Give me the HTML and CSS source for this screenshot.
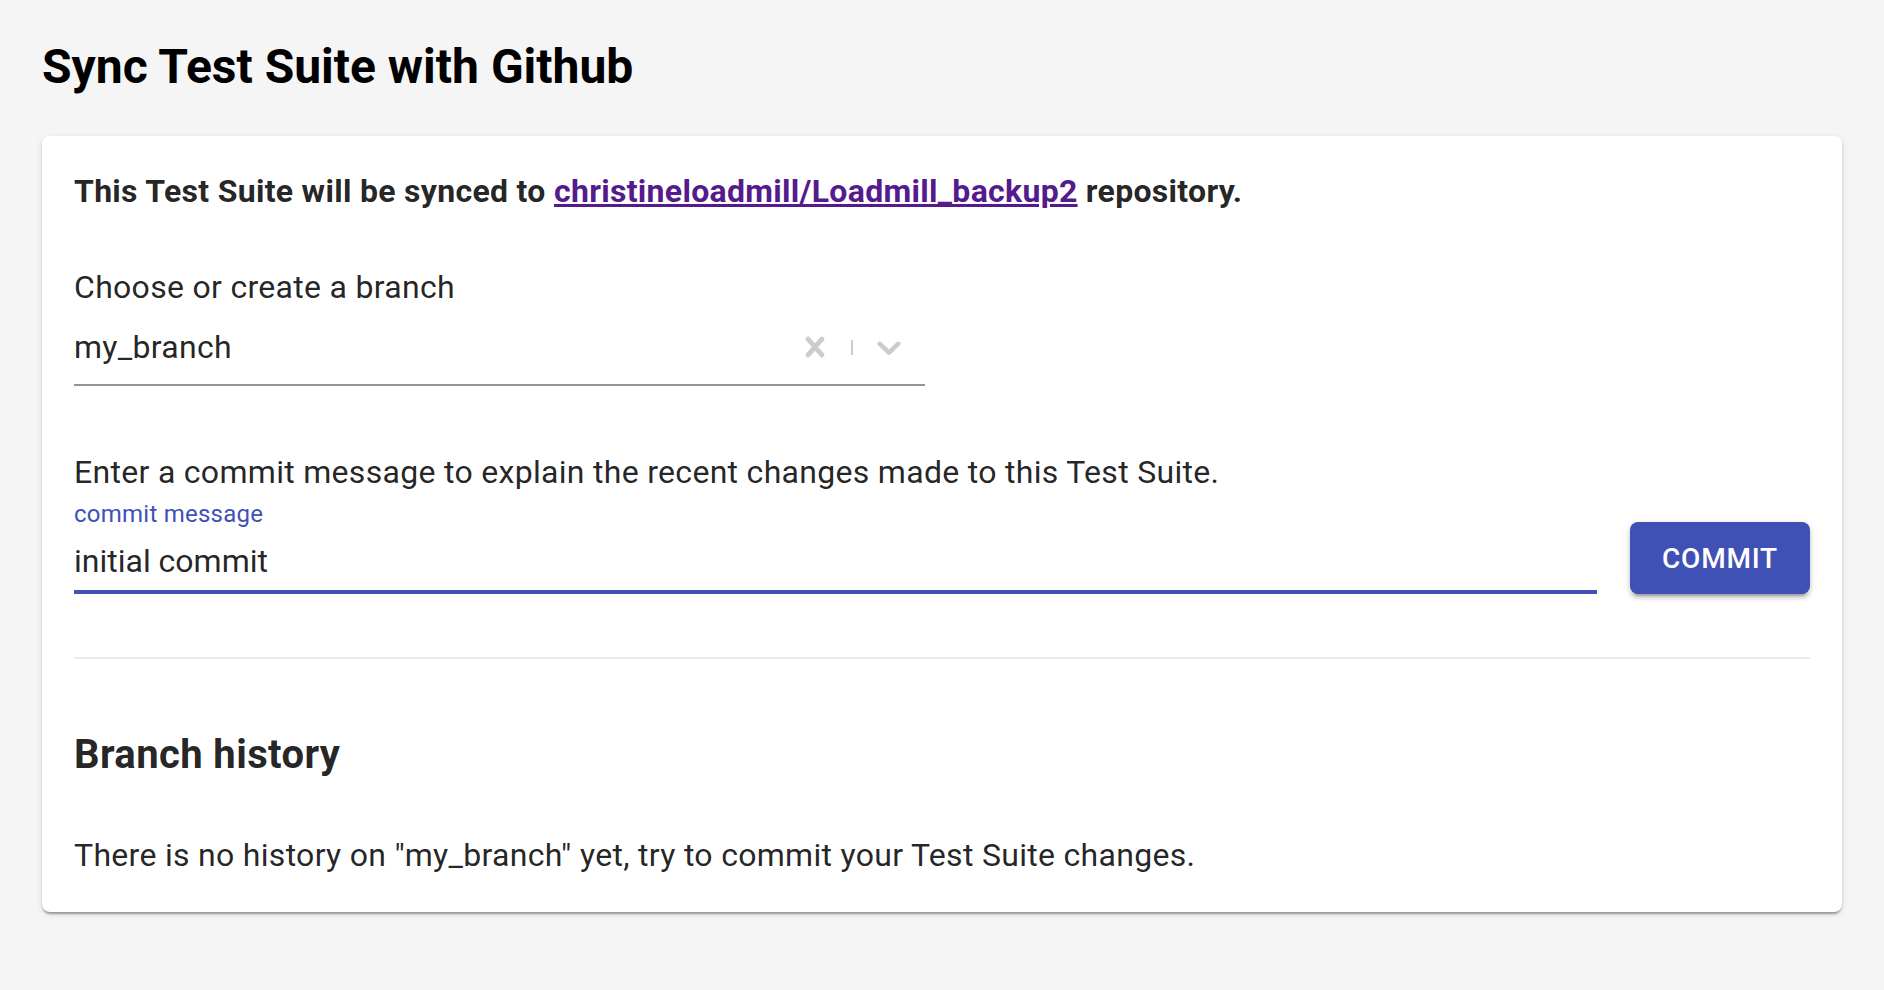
FILE: index.html
```html
<!DOCTYPE html>
<html lang="en">
<head>
<meta charset="utf-8">
<title>Sync Test Suite with Github</title>
<link rel="stylesheet" href="styles.css">
</head>
<body>
<div class="page">
  <h1 class="title">Sync Test Suite with Github</h1>
  <div class="card">
    <p class="sync-line">This Test Suite will be synced to <a class="repo-link" href="#">christineloadmill/Loadmill_backup2</a> repository.</p>

    <p class="field-caption branch-caption">Choose or create a branch</p>
    <div class="select">
      <div class="select-value">my_branch</div>
      <div class="select-indicators">
        <span class="indicator">
          <svg class="ind-icon" viewBox="0 0 20 20" width="40" height="40" aria-hidden="true"><path fill="currentColor" d="M14.348 14.849c-0.469 0.469-1.229 0.469-1.697 0l-2.651-3.030-2.651 3.029c-0.469 0.469-1.229 0.469-1.697 0-0.469-0.469-0.469-1.229 0-1.697l2.758-3.15-2.759-3.152c-0.469-0.469-0.469-1.228 0-1.697s1.228-0.469 1.697 0l2.652 3.031 2.651-3.031c0.469-0.469 1.228-0.469 1.697 0s0.469 1.229 0 1.697l-2.758 3.152 2.758 3.15c0.469 0.469 0.469 1.229 0 1.698z"/></svg>
        </span>
        <span class="separator"></span>
        <span class="indicator">
          <svg class="ind-icon" viewBox="0 0 20 20" width="40" height="40" aria-hidden="true"><path fill="currentColor" d="M4.516 7.548c0.436-0.446 1.043-0.481 1.576 0l3.908 3.747 3.908-3.747c0.533-0.481 1.141-0.446 1.574 0 0.436 0.445 0.408 1.197 0 1.615-0.406 0.418-4.695 4.502-4.695 4.502-0.217 0.223-0.502 0.335-0.787 0.335s-0.57-0.112-0.789-0.335c0 0-4.287-4.084-4.695-4.502s-0.436-1.17 0-1.615z"/></svg>
        </span>
      </div>
    </div>

    <p class="field-caption commit-caption">Enter a commit message to explain the recent changes made to this Test Suite.</p>
    <div class="commit-row">
      <div class="text-field">
        <label class="tf-label">commit message</label>
        <div class="tf-input">initial commit</div>
      </div>
      <button class="commit-btn" type="button">Commit</button>
    </div>

    <hr class="divider">

    <h2 class="history-title">Branch history</h2>
    <p class="history-empty">There is no history on "my_branch" yet, try to commit your Test Suite changes.</p>
  </div>
</div>
</body>
</html>
```
FILE: styles.css
```css
* { box-sizing: border-box; }

html, body {
  margin: 0;
  padding: 0;
  background: #f5f5f5;
  font-family: Roboto, "Liberation Sans", Arial, sans-serif;
  color: rgba(0, 0, 0, 0.87);
}

.page {
  padding: 39px 42px 60px 42px;
}

.title {
  margin: 0 0 41px 0;
  font-size: 48px;
  line-height: 56px;
  font-weight: 700;
  color: #000;
}

.card {
  background: #fff;
  border-radius: 8px;
  padding: 31px 32px 33px 32px;
  box-shadow: 0px 4px 2px -2px rgba(0,0,0,0.2), 0px 2px 2px 0px rgba(0,0,0,0.14), 0px 2px 6px 0px rgba(0,0,0,0.12);
}

.sync-line {
  margin: 0;
  font-size: 32px;
  line-height: 48px;
  font-weight: 700;
  letter-spacing: 0.3px;
}

.repo-link {
  color: #551a8b;
  text-decoration: underline;
}

.field-caption {
  margin: 0;
  font-size: 32px;
  line-height: 48px;
  font-weight: 400;
  letter-spacing: 0.3px;
}

.branch-caption { margin-top: 48px; }

.select {
  width: 851px;
  display: flex;
  align-items: center;
  padding: 12px 0 13px 0;
  border-bottom: 2px solid rgba(0, 0, 0, 0.42);
}

.select-value {
  flex: 1;
  font-size: 32px;
  line-height: 48px;
  letter-spacing: 0.3px;
}

.select-indicators {
  display: flex;
  align-items: center;
}

.indicator {
  width: 72px;
  height: 48px;
  display: flex;
  align-items: center;
  justify-content: center;
  color: #cccccc;
}

.ind-icon { display: block; }

.separator {
  width: 2px;
  height: 15px;
  background: #cccccc;
}

.commit-caption { margin-top: 62px; }

.commit-row {
  display: flex;
  align-items: flex-end;
  gap: 33px;
}

.text-field {
  flex: 1;
  display: flex;
  flex-direction: column;
  border-bottom: 4px solid #3f51b5;
  padding-bottom: 9px;
}

.tf-label {
  font-size: 24px;
  line-height: 28px;
  color: #3f51b5;
  letter-spacing: 0.01em;
  margin-top: 4px;
}

.tf-input {
  margin-top: 13px;
  font-size: 32px;
  line-height: 40px;
  letter-spacing: 0;
}

.commit-btn {
  width: 180px;
  height: 72px;
  padding: 12px 32px;
  border: none;
  border-radius: 8px;
  background: #3f51b5;
  color: #fff;
  font-family: Roboto, "Liberation Sans", Arial, sans-serif;
  font-size: 28px;
  font-weight: 500;
  letter-spacing: 0.02857em;
  text-transform: uppercase;
  box-shadow: 0px 6px 2px -4px rgba(0,0,0,0.2), 0px 4px 4px 0px rgba(0,0,0,0.14), 0px 2px 10px 0px rgba(0,0,0,0.12);
}

.divider {
  margin: 63px 0 0 0;
  border: none;
  height: 2px;
  background: #ececec;
}

.history-title {
  margin: 72px 0 0 0;
  font-size: 40px;
  line-height: 48px;
  font-weight: 700;
  letter-spacing: 0.4px;
}

.history-empty {
  margin: 52px 0 0 0;
  font-size: 32px;
  line-height: 48px;
  letter-spacing: 0.3px;
}
```
